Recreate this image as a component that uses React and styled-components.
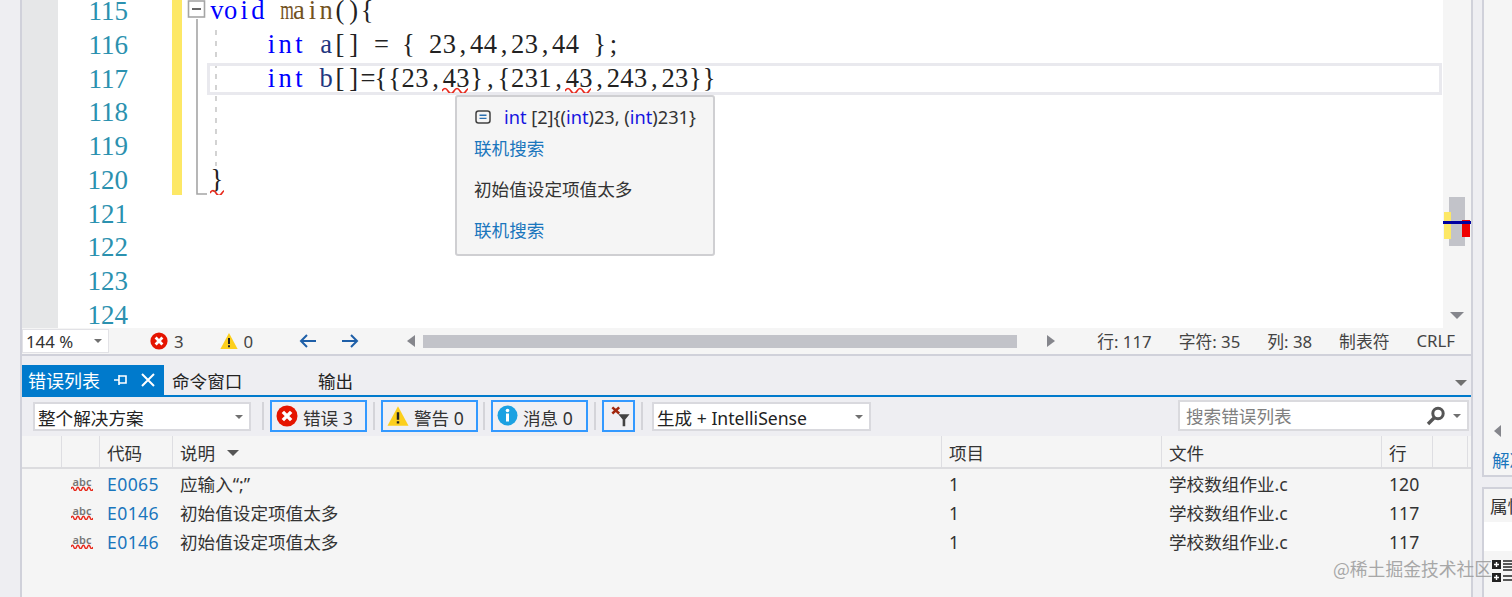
import React from 'react';
import styled, { createGlobalStyle } from 'styled-components';

const UI_FONT = '"Noto Sans", "Noto Sans CJK SC", sans-serif';
const CODE_FONT = '"Liberation Serif", "Noto Sans CJK SC", serif';
const GRID_COLS = '40px 38px 73px 769px 220px 220px 51px 35px 1fr';

const GlobalStyle = createGlobalStyle`
  html, body { margin: 0; padding: 0; background: #eeeef2; }
  * { box-sizing: border-box; }
`;

const Page = styled.div`
  width: 1512px;
  height: 597px;
  display: flex;
  overflow: hidden;
  position: relative;
  background: #eeeef2;
  font-family: ${UI_FONT};
  font-size: 17.6px;
  color: #333;
`;
const LeftRail = styled.div`
  width: 22px;
  flex: none;
  border-right: 2px solid #d0d1da;
`;
const Main = styled.div`
  width: 1451px;
  flex: none;
  display: flex;
  flex-direction: column;
  border-right: 2px solid #d0d1da;
`;

/* editor */
const Editor = styled.div`
  height: 328px;
  flex: none;
  display: flex;
  position: relative;
  overflow: hidden;
  background: #fff;
`;
const GlyphMargin = styled.div`
  width: 36px;
  flex: none;
  background: #e6e7e8;
`;
const Numbers = styled.div`
  width: 70px;
  flex: none;
  margin-top: -5px;
  text-align: right;
  font-family: ${CODE_FONT};
  font-size: 27px;
  line-height: 33.75px;
  color: #2b91af;
`;
const ChangeBar = styled.div`
  width: 10px;
  height: 195px;
  flex: none;
  margin-left: 44px;
  background: #fde866;
`;
const FoldSvg = styled.svg`
  width: 26px;
  height: 200px;
  flex: none;
  overflow: visible;
`;
const CodeColumn = styled.div`
  flex: 1;
  margin-top: -6px;
  padding-left: 2px;
  font-family: ${CODE_FONT};
  font-size: 26.5px;
`;
const CodeLine = styled.div`
  height: 33.75px;
  line-height: 33.75px;
  white-space: pre;
  position: relative;
  ${p => p.$current && `
    &::before {
      content: '';
      position: absolute;
      left: -3px;
      right: 1px;
      top: 1px;
      bottom: 0;
      border: 3px solid #e9e9ee;
    }
  `}
`;
const Cell = styled.span`
  display: inline-block;
  width: 13.68px;
  text-align: center;
  color: ${p => p.$color || '#222'};
  ${p => p.$wide && 'transform: scaleX(0.66);'}
`;
const Squiggled = styled.span`
  position: relative;
  display: inline-block;
`;
const WaveSvg = styled.svg`
  position: absolute;
  left: 0;
  bottom: 2px;
  height: 6px;
`;

const Overview = styled.div`
  width: 28px;
  flex: none;
  background: #f5f5f5;
  position: relative;
`;
const OverThumb = styled.div`
  position: absolute;
  left: 6px;
  top: 197px;
  width: 16px;
  height: 49px;
  background: #c2c3c9;
`;
const OverMark = styled.div`
  position: absolute;
  left: ${p => p.$l}px;
  top: ${p => p.$t}px;
  width: ${p => p.$w}px;
  height: ${p => p.$h}px;
  background: ${p => p.$c};
`;
const DownArrow = styled.div`
  position: absolute;
  left: 7px;
  bottom: 9px;
  border-left: 7px solid transparent;
  border-right: 7px solid transparent;
  border-top: 7px solid #85868c;
`;

/* hover tooltip over the editor */
const Popup = styled.div`
  position: absolute;
  left: 433px;
  top: 95px;
  width: 260px;
  height: 161px;
  display: flex;
  flex-direction: column;
  padding: 7px 17px 0;
  background: #f5f5f5;
  border: 2px solid #cfcfd2;
  border-radius: 3px;
  font-size: 17.6px;
  line-height: 26px;
`;
const PopupHead = styled.div`
  display: flex;
  align-items: center;
  gap: 13px;
  margin-left: 1px;
  font-size: 18.2px;
  white-space: nowrap;
`;
const Kw = styled.span`
  color: #1515e0;
`;
const PopupLink = styled.div`
  color: #1a76bd;
  margin-top: ${p => p.$mt || 0}px;
`;
const PopupText = styled.div`
  color: #333;
  margin-top: 15px;
`;

/* editor status bar */
const StatusBar = styled.div`
  height: 28px;
  flex: none;
  display: flex;
  align-items: center;
  padding-right: 16px;
  background: #f5f5f5;
  border-bottom: 2px solid #d0d1da;
  font-size: 16.8px;
  color: #444;
`;
const ZoomCombo = styled.div`
  width: 87px;
  height: 24px;
  flex: none;
  display: flex;
  align-items: center;
  justify-content: space-between;
  padding: 0 6px 0 3px;
  background: #fff;
  border: 1px solid #e2e2e6;
  color: #333;
`;
const SmallCaret = styled.span`
  display: inline-block;
  border-left: 4px solid transparent;
  border-right: 4px solid transparent;
  border-top: 4px solid #707070;
`;
const StatusCount = styled.div`
  display: flex;
  align-items: center;
  gap: 6px;
  margin-left: ${p => p.$ml}px;
`;
const NavArrows = styled.div`
  display: flex;
  gap: 24px;
  margin-left: 46px;
`;
const HScroll = styled.div`
  display: flex;
  align-items: center;
  margin-left: 48px;
`;
const ScrollArrow = styled.span`
  border-top: 6px solid transparent;
  border-bottom: 6px solid transparent;
  ${p => p.$left ? 'border-right: 8px solid #85868c;' : 'border-left: 8px solid #85868c;'}
`;
const ScrollThumb = styled.div`
  width: 594px;
  height: 13px;
  margin: 0 30px 0 8px;
  background: #c2c3c9;
`;
const StatusRight = styled.div`
  margin-left: auto;
  display: flex;
  gap: 27px;
`;

/* tool window */
const TabWell = styled.div`
  height: 30px;
  flex: none;
  margin-top: 9px;
  display: flex;
  align-items: stretch;
  position: relative;
`;
const ActiveTab = styled.div`
  width: 142px;
  display: flex;
  align-items: center;
  padding-left: 6px;
  background: #007acc;
  color: #fff;
  font-size: 18px;
`;
const TabIcons = styled.div`
  display: flex;
  align-items: center;
  gap: 13px;
  margin-left: 14px;
`;
const Tab = styled.div`
  display: flex;
  align-items: center;
  width: ${p => p.$w}px;
  margin-left: ${p => p.$ml || 0}px;
  font-size: 17.6px;
  color: #222;
`;
const WellCaret = styled.span`
  position: absolute;
  right: 4px;
  top: 15px;
  border-left: 6px solid transparent;
  border-right: 6px solid transparent;
  border-top: 6px solid #707070;
`;
const Toolbar = styled.div`
  height: 41px;
  flex: none;
  display: flex;
  align-items: center;
  border-top: 2px solid #007acc;
  padding: 0 2px 2px 11px;
`;
const Combo = styled.div`
  width: ${p => p.$w}px;
  height: 29px;
  margin-top: 2px;
  flex: none;
  display: flex;
  align-items: center;
  justify-content: space-between;
  padding: 1px 6px 0 3px;
  background: #fff;
  border: 2px solid #d9d9de;
  color: #222;
`;
const Sep = styled.span`
  width: 2px;
  height: 28px;
  flex: none;
  margin: 0 ${p => p.$mr ?? 6}px 0 ${p => p.$ml ?? 11}px;
  background: #d4d4d9;
`;
const ToggleBtn = styled.div`
  width: ${p => p.$w || 97}px;
  height: 32px;
  flex: none;
  display: flex;
  align-items: center;
  gap: 5px;
  padding-left: 4px;
  border: 2px solid #3399ff;
  background: #f0f0f4;
  color: #333;
  white-space: nowrap;
`;
const ToggleLabel = styled.span`
  margin-top: 3px;
`;
const SearchBox = styled.div`
  width: 291px;
  height: 31px;
  flex: none;
  margin-left: auto;
  display: flex;
  align-items: center;
  justify-content: space-between;
  padding: 0 6px;
  background: #fff;
  border: 2px solid #dadade;
  color: #808080;
`;
const SearchTools = styled.div`
  display: flex;
  align-items: center;
  gap: 7px;
`;

/* error grid */
const Grid = styled.div`
  flex: 1;
  display: flex;
  flex-direction: column;
  background: #f5f5f5;
`;
const HeaderRow = styled.div`
  height: 33px;
  flex: none;
  display: grid;
  grid-template-columns: ${GRID_COLS};
  border-bottom: 2px solid #dcdcdf;
`;
const HeaderCell = styled.div`
  display: flex;
  align-items: center;
  gap: 12px;
  padding: 2px 0 0 7px;
  border-right: ${p => p.$last ? 'none' : '1px solid #dedee2'};
  color: #333;
`;
const SortCaret = styled.span`
  border-left: 6px solid transparent;
  border-right: 6px solid transparent;
  border-top: 6px solid #555;
`;
const Row = styled.div`
  height: 29px;
  display: grid;
  grid-template-columns: ${GRID_COLS};
  align-items: center;
`;
const RowCell = styled.div`
  padding-left: 7px;
  white-space: nowrap;
  color: ${p => p.$link ? '#1a76bd' : '#333'};
  ${p => p.$link && 'letter-spacing: 0.4px;'}
`;
const AbcIcon = styled.div`
  grid-column: 2;
  display: flex;
  flex-direction: column;
  align-items: center;
  width: 22px;
  margin-left: 9px;
  font-size: 11px;
  line-height: 9px;
  font-weight: 600;
  color: #777;
`;

/* right dock */
const Dock = styled.div`
  flex: 1;
  display: flex;
  flex-direction: column;
  padding-left: 9px;
  overflow: hidden;
`;
const DockTop = styled.div`
  height: 477px;
  flex: none;
  display: flex;
  flex-direction: column;
  padding: 0 0 3px 8px;
  justify-content: flex-end;
  background: #f5f5f5;
  border-left: 2px solid #d0d1da;
  border-bottom: 2px solid #d0d1da;
`;
const DockLink = styled.div`
  color: #1a76bd;
  margin-top: 10px;
  white-space: nowrap;
`;
const DockArrow = styled.span`
  width: 0;
  border-top: 6px solid transparent;
  border-bottom: 6px solid transparent;
  border-right: 7px solid #85868c;
  margin-left: 2px;
`;
const DockBottom = styled.div`
  margin-top: 10px;
  flex: 1;
  background: #f5f5f5;
  border-left: 2px solid #d0d1da;
  border-top: 2px solid #d0d1da;
`;
const DockTitle = styled.div`
  height: 33px;
  display: flex;
  align-items: center;
  padding-left: 6px;
  color: #333;
  white-space: nowrap;
`;
const DockWhite = styled.div`
  height: 29px;
  background: #fff;
`;
const DockTools = styled.svg`
  display: block;
  margin: 9px 0 0 8px;
`;

const Watermark = styled.div`
  position: absolute;
  left: 1333px;
  top: 556px;
  font-family: "Noto Sans CJK SC", sans-serif;
  font-size: 17.8px;
  line-height: 24px;
  color: #9a9a9a;
  opacity: 0.85;
  white-space: nowrap;
`;

const BLUE = '#0000ff';
const BROWN = '#74531f';
const NAVY = '#1f377f';

// monospaced cells, the code font in the picture is a serif with fixed pitch
const Code = ({ text, color }) => (
  <>
    {[...text].map((ch, i) => (
      <Cell key={i} $color={color} $wide={ch === 'm'}>{ch}</Cell>
    ))}
  </>
);

const Wave = ({ width }) => {
  let d = 'M0 4';
  for (let x = 0; x < width; x += 12) {
    d += ` q3 -5 6 0 t6 0`;
  }
  return (
    <WaveSvg width={width} viewBox={`0 0 ${width} 6`}>
      <path d={d} fill="none" stroke="#e8291c" strokeWidth="1.6" />
    </WaveSvg>
  );
};

const Squiggle = ({ text, width }) => (
  <Squiggled>
    <Code text={text} />
    <Wave width={width} />
  </Squiggled>
);

const ErrorIcon = ({ size = 18 }) => (
  <svg width={size} height={size} viewBox="0 0 18 18">
    <circle cx="9" cy="9" r="8.6" fill="#e51400" />
    <path d="M5.6 5.6 12.4 12.4M12.4 5.6 5.6 12.4" stroke="#fff" strokeWidth="2.8" />
  </svg>
);
const WarnIcon = ({ size = 18 }) => (
  <svg width={size} height={size} viewBox="0 0 18 18">
    <path d="M9 1 17.6 17H.4Z" fill="#fccf1c" />
    <path d="M9 6v6M9 13.2v2" stroke="#222" strokeWidth="2" />
  </svg>
);
const InfoIcon = () => (
  <svg width="21" height="21" viewBox="0 0 21 21">
    <circle cx="10.5" cy="10.5" r="10" fill="#1ba1e2" />
    <path d="M10.5 8.5v8" stroke="#fff" strokeWidth="3" />
    <circle cx="10.5" cy="5.5" r="1.8" fill="#fff" />
  </svg>
);
const FilterIcon = () => (
  <svg width="29" height="28" viewBox="0 0 29 28">
    <path d="M5 4 13 11M13 4 5 11" stroke="#a1260d" strokeWidth="3" />
    <path d="M12 12h13l-5 6v8h-3v-8Z" fill="#424242" />
  </svg>
);
const ArrowIcon = ({ flip }) => (
  <svg width="18" height="14" viewBox="0 0 18 14" style={flip ? { transform: 'scaleX(-1)' } : undefined}>
    <path d="M17 7H2M8 1 2 7l6 6" fill="none" stroke="#1e5fa8" strokeWidth="2" />
  </svg>
);
const PinIcon = () => (
  <svg width="14" height="12" viewBox="0 0 14 12">
    <path d="M0 6h5M5 1v10M5 2h7v7H5" fill="none" stroke="#fff" strokeWidth="1.6" />
  </svg>
);
const CloseIcon = () => (
  <svg width="14" height="14" viewBox="0 0 14 14">
    <path d="M1 1 13 13M13 1 1 13" stroke="#fff" strokeWidth="2" />
  </svg>
);
const MagnifierIcon = () => (
  <svg width="20" height="20" viewBox="0 0 20 20">
    <circle cx="12" cy="7.5" r="5.2" fill="none" stroke="#555" strokeWidth="3" />
    <path d="M8 12 2 18" stroke="#555" strokeWidth="3.4" />
  </svg>
);
const MemberIcon = () => (
  <svg width="16" height="14" viewBox="0 0 16 14">
    <rect x="1" y="1" width="14" height="12" rx="2.5" fill="none" stroke="#424242" strokeWidth="1.5" />
    <path d="M4.5 5.2h7M4.5 8.4h7" stroke="#2a6fb0" strokeWidth="1.4" />
  </svg>
);

const lineNumbers = [115, 116, 117, 118, 119, 120, 121, 122, 123, 124];
const errors = [
  { code: 'E0065', text: '应输入“;”', line: 120 },
  { code: 'E0146', text: '初始值设定项值太多', line: 117 },
  { code: 'E0146', text: '初始值设定项值太多', line: 117 },
];

const App = () => {
  return (
    <Page>
      <GlobalStyle />
      <LeftRail />
      <Main>
        <Editor>
          <GlyphMargin />
          <Numbers>
            {lineNumbers.map(n => <div key={n}>{n}</div>)}
          </Numbers>
          <ChangeBar />
          <FoldSvg viewBox="0 0 26 200">
            <rect x="6.5" y="1" width="16" height="16" fill="#fff" stroke="#a5a5a5" strokeWidth="1.6" />
            <path d="M10 9h9" stroke="#444" strokeWidth="1.6" />
            <path d="M15 19v175h10" fill="none" stroke="#a5a5a5" strokeWidth="1.6" />
            <path d="M34 30v136" fill="none" stroke="#c8c8c8" strokeWidth="1.6" strokeDasharray="5 6" />
          </FoldSvg>
          <CodeColumn>
            <CodeLine>
              <Code text="void" color={BLUE} /><Code text=" " /><Code text="main" color={BROWN} /><Code text="(){" />
            </CodeLine>
            <CodeLine>
              <Code text="    " /><Code text="int" color={BLUE} /><Code text=" " /><Code text="a" color={NAVY} /><Code text="[] = { 23,44,23,44 };" />
            </CodeLine>
            <CodeLine $current>
              <Code text="    " /><Code text="int" color={BLUE} /><Code text=" " /><Code text="b" color={NAVY} /><Code text="[]={{23," />
              <Squiggle text="43" width={26} /><Code text="},{231," /><Squiggle text="43" width={26} /><Code text=",243,23}}" />
            </CodeLine>
            <CodeLine />
            <CodeLine />
            <CodeLine><Squiggle text="}" width={14} /></CodeLine>
          </CodeColumn>
          <Overview>
            <OverThumb />
            <OverMark $l={1} $t={212} $w={7} $h={27} $c="#fde866" />
            <OverMark $l={19} $t={220} $w={8} $h={17} $c="#f00000" />
            <OverMark $l={0} $t={221} $w={28} $h={3} $c="#0000a0" />
            <DownArrow />
          </Overview>
          <Popup>
            <PopupHead>
              <MemberIcon />
              <span><Kw>int</Kw> [2]{'{'}(<Kw>int</Kw>)23, (<Kw>int</Kw>)231{'}'}</span>
            </PopupHead>
            <PopupLink $mt={5}>联机搜索</PopupLink>
            <PopupText>初始值设定项值太多</PopupText>
            <PopupLink $mt={15}>联机搜索</PopupLink>
          </Popup>
        </Editor>

        <StatusBar>
          <ZoomCombo>144 %<SmallCaret /></ZoomCombo>
          <StatusCount $ml={41}><ErrorIcon />3</StatusCount>
          <StatusCount $ml={36}><WarnIcon />0</StatusCount>
          <NavArrows><ArrowIcon /><ArrowIcon flip /></NavArrows>
          <HScroll>
            <ScrollArrow $left />
            <ScrollThumb />
            <ScrollArrow />
          </HScroll>
          <StatusRight>
            <span>行: 117</span>
            <span>字符: 35</span>
            <span>列: 38</span>
            <span>制表符</span>
            <span>CRLF</span>
          </StatusRight>
        </StatusBar>

        <TabWell>
          <ActiveTab>
            错误列表
            <TabIcons><PinIcon /><CloseIcon /></TabIcons>
          </ActiveTab>
          <Tab $w={146} $ml={8}>命令窗口</Tab>
          <Tab $w={60}>输出</Tab>
          <WellCaret />
        </TabWell>

        <Toolbar>
          <Combo $w={218}>整个解决方案<SmallCaret /></Combo>
          <Sep />
          <ToggleBtn><ErrorIcon size={22} /><ToggleLabel>错误 3</ToggleLabel></ToggleBtn>
          <Sep $ml={6} />
          <ToggleBtn><WarnIcon size={22} /><ToggleLabel>警告 0</ToggleLabel></ToggleBtn>
          <Sep $ml={5} />
          <ToggleBtn><InfoIcon /><ToggleLabel>消息 0</ToggleLabel></ToggleBtn>
          <Sep $ml={6} />
          <ToggleBtn $w={33}><FilterIcon /></ToggleBtn>
          <Sep $ml={6} $mr={9} />
          <Combo $w={219}>生成 + IntelliSense<SmallCaret /></Combo>
          <SearchBox>
            搜索错误列表
            <SearchTools><MagnifierIcon /><SmallCaret /></SearchTools>
          </SearchBox>
        </Toolbar>

        <Grid>
          <HeaderRow>
            <HeaderCell />
            <HeaderCell />
            <HeaderCell>代码</HeaderCell>
            <HeaderCell>说明<SortCaret /></HeaderCell>
            <HeaderCell>项目</HeaderCell>
            <HeaderCell>文件</HeaderCell>
            <HeaderCell>行</HeaderCell>
            <HeaderCell />
            <HeaderCell $last />
          </HeaderRow>
          <div>
            {errors.map((e, i) => (
              <Row key={i}>
                <span />
                <AbcIcon>
                  abc
                  <svg width="22" height="5" viewBox="0 0 22 5">
                    <path d="M0 3q1.4-3.4 2.75 0t2.75 0 2.75 0 2.75 0 2.75 0 2.75 0 2.75 0 2.75 0" fill="none" stroke="#e8291c" strokeWidth="1.5" />
                  </svg>
                </AbcIcon>
                <RowCell $link>{e.code}</RowCell>
                <RowCell>{e.text}</RowCell>
                <RowCell>1</RowCell>
                <RowCell>学校数组作业.c</RowCell>
                <RowCell>{e.line}</RowCell>
              </Row>
            ))}
          </div>
        </Grid>
      </Main>

      <Dock>
        <DockTop>
          <DockArrow />
          <DockLink>解决方案</DockLink>
        </DockTop>
        <DockBottom>
          <DockTitle>属性</DockTitle>
          <DockWhite />
          <DockTools width="22" height="24" viewBox="0 0 22 24">
            <rect x="0" y="0" width="9" height="9" fill="#222" />
            <rect x="0" y="13" width="9" height="9" fill="#222" />
            <path d="M2 4.5h5M4.5 2v5M2 17.5h5M4.5 15v5" stroke="#fff" strokeWidth="1.4" />
            <path d="M11 1h11M11 4h11M11 7h11M11 10h11M11 16h11M11 20h11" stroke="#222" strokeWidth="1.6" />
          </DockTools>
        </DockBottom>
      </Dock>

      <Watermark>@稀土掘金技术社区</Watermark>
    </Page>
  );
};

export default App;
